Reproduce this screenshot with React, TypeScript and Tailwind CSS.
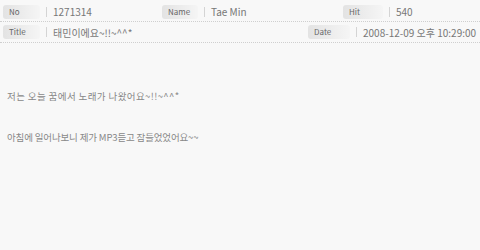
const font = { fontFamily: '"Noto Sans CJK KR", "Noto Sans", sans-serif' };

const Label = ({ text, w }: { text: string; w: string }) => (
  <div
    className={`${w} h-[14px] shrink-0 rounded-[3px] bg-gradient-to-r from-[#e3e3e3] via-[#ececec] to-[#f5f5f5] pl-[6px] text-[8px] leading-[14px] text-[#666]`}
  >
    {text}
  </div>
);

const Sep = () => <div className="mx-[6px] h-[10px] w-px shrink-0 bg-[#d4d4d4]" />;

const App = () => {
  return (
    <div className="h-[250px] w-[480px] bg-[#f8f8f8] text-[#777]" style={font}>
      <div className="flex h-[22px] items-center border-b border-dotted border-[#cfcfcf] pl-[3px] pt-[2px]">
        <div className="flex w-[159px] items-center">
          <Label text="No" w="w-[37px]" />
          <Sep />
          <span className="text-[10px]">1271314</span>
        </div>
        <div className="flex w-[181px] items-center">
          <Label text="Name" w="w-[36px]" />
          <Sep />
          <span className="text-[10px]">Tae Min</span>
        </div>
        <div className="flex items-center">
          <Label text="Hit" w="w-[40px]" />
          <Sep />
          <span className="text-[10px]">540</span>
        </div>
      </div>
      <div className="flex h-[21px] items-center border-b border-dotted border-[#cfcfcf] pl-[3px]">
        <div className="flex w-[305px] items-center">
          <Label text="Title" w="w-[37px]" />
          <Sep />
          <span className="text-[10px]">태민이에요~!!~^^*</span>
        </div>
        <div className="flex items-center">
          <Label text="Date" w="w-[42px]" />
          <Sep />
          <span className="text-[10px]">2008-12-09 오후 10:29:00</span>
        </div>
      </div>
      <div className="px-[7px] pt-[47px] text-[9.5px] leading-[12px] text-[#888]">
        <p className="tracking-[0.4px]">저는 오늘 꿈에서 노래가 나왔어요~!!~^^*</p>
        <p className="mt-[29px] tracking-[-0.15px]">아침에 일어나보니 제가 MP3듣고 잠들었었어요~~</p>
      </div>
    </div>
  );
};

export default App;
